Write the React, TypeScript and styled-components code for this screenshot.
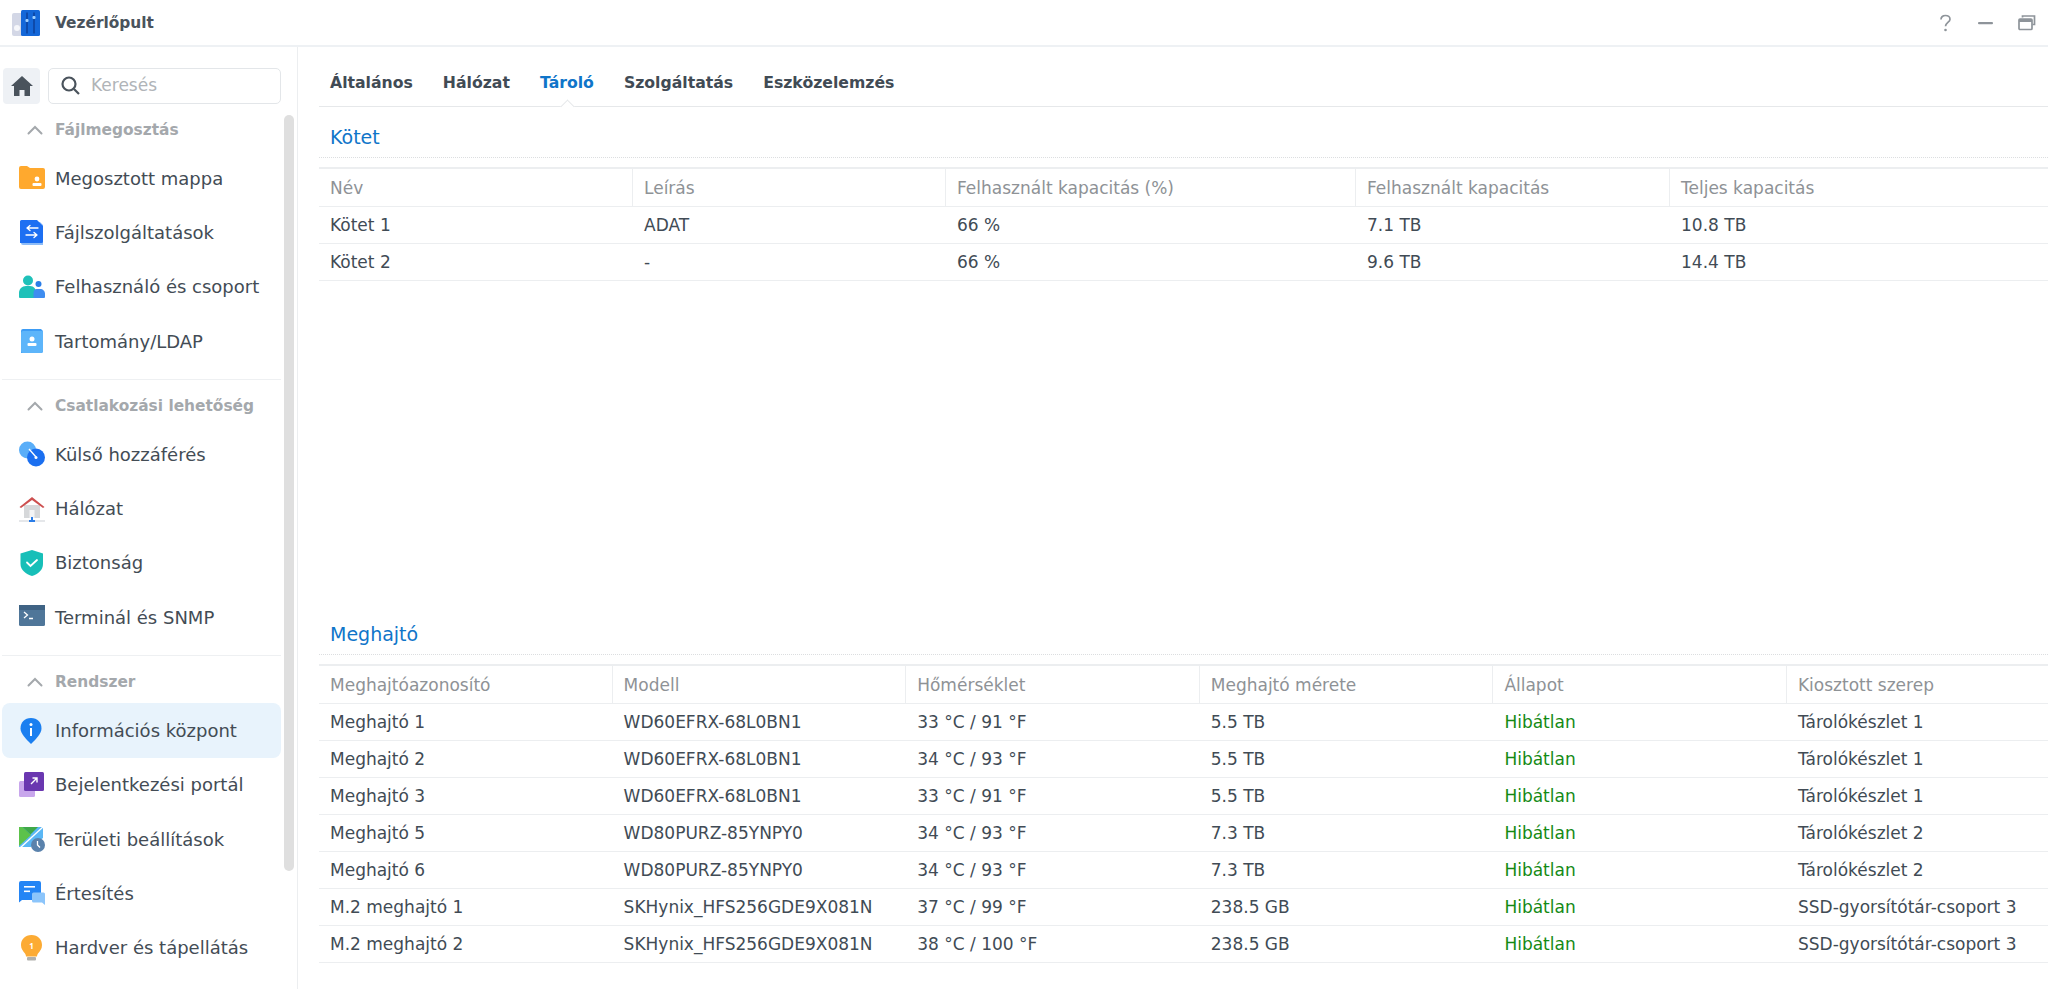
import React from "react";
import styled, { createGlobalStyle } from "styled-components";

const Global = createGlobalStyle`
  html, body { margin: 0; padding: 0; height: 100%; background: #fff; overflow: hidden; }
  body { font-family: "DejaVu Sans", "Noto Sans", sans-serif; color: #414b55; }
`;

const Page = styled.div`
  width: 2048px; height: 989px; display: flex; flex-direction: column; overflow: hidden; background: #fff;
`;
const TitleBar = styled.header`
  height: 45px; flex: none; display: flex; align-items: center; padding: 0 12px 0 12px;
  border-bottom: 2px solid #eef1f4; box-sizing: content-box;
`;
const AppLogo = styled.svg`width: 28px; height: 28px; flex: none;`;
const AppTitle = styled.span`margin-left: 15px; font-size: 15.400px; font-weight: 700; color: #4a535c; flex: 1;`;
const WinButtons = styled.div`display: flex; align-items: center; gap: 23px; color: #8e949a;`;
const WinIcon = styled.svg`width: 18px; height: 18px; display: block;`;

const Body = styled.div`flex: 1; display: flex; min-height: 0;`;
const Sidebar = styled.aside`
  width: 298px; flex: none; border-right: 1px solid #eceef0; position: relative; overflow: hidden; padding: 21px 16px 0 2px; box-sizing: border-box;
`;
const SearchRow = styled.div`display: flex; gap: 8px; height: 36px; margin-bottom: 5px;`;
const HomeBtn = styled.div`
  width: 37px; height: 36px; border-radius: 4px; background: #eef1f5; display: flex; align-items: center; justify-content: center; flex: none; margin-left: 1px;
`;
const SearchBox = styled.div`
  flex: 1; border: 1px solid #e3e6e9; border-radius: 5px; display: flex; align-items: center; padding: 0 0 2px 12px; gap: 11px; font-size: 17px; color: #b0b4b8;
`;
const Group = styled.div<{ $divider?: boolean }>`
  border-bottom: ${p => (p.$divider ? "1px solid #eef0f2" : "none")};
  padding-bottom: ${p => (p.$divider ? "11px" : "0")};
  margin-bottom: 5px;
`;
const GroupHead = styled.div`
  height: 42px; display: flex; align-items: center; font-size: 15.400px; font-weight: 700; color: #a4a8ac; padding-left: 25px; gap: 12px;
`;
const NavItem = styled.div<{ $active?: boolean }>`
  height: 54.300px; border-radius: 8px; display: flex; align-items: center; padding-left: 17px; gap: 10px; font-size: 18px; color: #434c55;
  background: ${p => (p.$active ? "#e8f3fc" : "transparent")};
`;
const NavIcon = styled.svg`width: 26px; height: 26px; flex: none;`;
const ScrollThumb = styled.div`
  position: absolute; right: 3px; top: 68px; width: 10px; height: 756px; background: #dfdfdf; border-radius: 5px;
`;

const Main = styled.main`flex: 1; min-width: 0; padding-left: 21px; display: flex; flex-direction: column; overflow: hidden;`;
const Tabs = styled.nav`
  height: 60px; flex: none; border-bottom: 1px solid #e6e8ea; display: flex; align-items: center; gap: 30px; padding: 12px 0 0 11px; box-sizing: border-box; position: relative;
`;
const Tab = styled.span<{ $active?: boolean }>`
  font-size: 15.700px; font-weight: 700; color: ${p => (p.$active ? "#0f75c9" : "#414b55")}; position: relative;
  ${p => p.$active ? `
    &::after { content: ""; position: absolute; left: 50%; bottom: -20px; width: 10px; height: 10px; margin-left: -5px; background: #fff;
      border-left: 1px solid #e6e8ea; border-top: 1px solid #e6e8ea; transform: rotate(45deg) scale(.9); }
  ` : ""}
`;
const Section = styled.section<{ $h: number }>`height: ${p => p.$h}px; flex: none;`;
const SectionTitle = styled.div`
  height: 51px; box-sizing: border-box; border-bottom: 1px dotted #dcdee0; color: #0f75c9; font-size: 19px; padding: 17px 0 0 11px; line-height: 26px;
`;
const Table = styled.div`margin-top: 9px; border-top: 2px solid #eceef0;`;
const Row = styled.div<{ $cols: string; $head?: boolean }>`
  display: grid; grid-template-columns: ${p => p.$cols}; height: ${p => (p.$head ? "38px" : "37px")};
  border-bottom: 1px solid #eceef0; box-sizing: border-box;
`;
const Cell = styled.div<{ $head?: boolean; $ok?: boolean }>`
  display: flex; align-items: center; padding: ${p => (p.$head ? "1px" : "0")} 0 0 11px; font-size: 17px; white-space: nowrap; overflow: hidden;
  color: ${p => (p.$ok ? "#148a14" : p.$head ? "#8e9296" : "#414b55")};
  border-right: ${p => (p.$head ? "1px solid #eceef0" : "none")};
  &:last-child { border-right: none; }
`;

const Chevron = () => (
  <svg width="16" height="10" viewBox="0 0 16 10" fill="none"><path d="M1.5 8.5 8 2l6.5 6.5" stroke="#a4a8ac" strokeWidth="2" strokeLinecap="round" /></svg>
);

const icons: Record<string, React.ReactNode> = {
  folder: <>
    <path d="M0 3a2 2 0 0 1 2-2h6l3 2h13a2 2 0 0 1 2 2v17a2 2 0 0 1-2 2H2a2 2 0 0 1-2-2z" fill="#ffa92e" />
    <circle cx="18" cy="14" r="2.4" fill="#fff" /><rect x="13.5" y="18" width="9" height="3" rx="1" fill="#fff" />
  </>,
  file: <>
    <path d="M2 3h19l3 3v20H4a2 2 0 0 1-2-2z" fill="#8dbcf7" />
    <path d="M1 2.500A1.500 1.500 0 0 1 2.500 1H18l6 6v15.500a1.500 1.500 0 0 1-1.500 1.500H1z" fill="#1d6ff2" />
    <path d="M8 9h11M8 9l3-2.500M8 9l3 2.500M18 16H7M18 16l-3-2.500M18 16l-3 2.500" stroke="#fff" strokeWidth="1.300" fill="none" strokeLinecap="round" />
  </>,
  users: <>
    <circle cx="9" cy="6.500" r="5" fill="#1fc1b9" /><circle cx="19.500" cy="10" r="3" fill="#2a7de8" />
    <path d="M0 23v-4c0-4 3-7 7-7h4c4 0 6 3 6 7v5H1a1 1 0 0 1-1-1z" fill="#1fc1b9" />
    <path d="M14.500 24v-5c0-2 1-4 3-4h3.500c3 0 5 2 5 5v3a1 1 0 0 1-1 1z" fill="#3f8df0" />
  </>,
  ldap: <>
    <path d="M2 3a2 2 0 0 1 2-2h18l2 2v20a2 2 0 0 1-2 2H2z" fill="#3d9cf5" />
    <path d="M2 5a2 2 0 0 1 2-2h20v20a2 2 0 0 1-2 2H4a2 2 0 0 1-2-2z" fill="#5db5fa" />
    <circle cx="13" cy="11" r="2.500" fill="#fff" /><rect x="8.500" y="15" width="9" height="3" rx="1" fill="#fff" />
  </>,
  ext: <>
    <circle cx="8.500" cy="9" r="8.500" fill="#5aaef8" /><circle cx="17" cy="16.500" r="9" fill="#1b6ff0" />
    <path d="M10 8l7 8" stroke="#fff" strokeWidth="1.400" /><circle cx="17" cy="16.500" r="1.500" fill="#fff" />
  </>,
  net: <>
    <rect x="5" y="9" width="16" height="13" fill="#d6d8da" /><rect x="10.500" y="14" width="5" height="8" fill="#f3f4f5" />
    <path d="M0.500 11 13 1l12.500 10-1.500 1L13 4 2 12z" fill="#cd4f4f" />
    <path d="M0 25h26" stroke="#d4d8dc" strokeWidth="1.200" /><rect x="12" y="21" width="2" height="3" fill="#2a7de8" /><rect x="10" y="24" width="6" height="2" fill="#2a7de8" />
  </>,
  shield: <>
    <path d="M13 0l11 3.500V14c0 6-5 10-11 12C7 24 1.500 20 1.500 14V3.500z" fill="#17bfb8" />
    <path d="M8 12.500l3.500 3.500L18 10" stroke="#fff" strokeWidth="1.800" fill="none" strokeLinecap="round" />
  </>,
  term: <>
    <rect y="1" width="26" height="21" rx="1.500" fill="#4f7699" /><rect y="1" width="26" height="5" fill="#3f6384" />
    <path d="M5 8l3.500 3L5 14M10 14.500h4" stroke="#fff" strokeWidth="1.300" fill="none" />
  </>,
  info: <>
    <path d="M12 0C5.500 0 1.500 4.500 1.500 10.500c0 5 6 11 10.500 15.500 4.500-4.500 10.500-10.500 10.500-15.500C22.500 4.500 18.500 0 12 0z" fill="#1b7ff0" />
    <circle cx="12" cy="6.500" r="1.500" fill="#fff" /><rect x="11" y="10" width="2" height="8" fill="#fff" />
  </>,
  portal: <>
    <rect x="0" y="9" width="16" height="16" rx="1.500" fill="#c8a6ec" />
    <rect x="5" y="0" width="20" height="19" rx="1.500" fill="#6a37b0" />
    <path d="M12 12l6-6M13.500 6H18v4.500" stroke="#fff" strokeWidth="1.400" fill="none" />
  </>,
  region: <>
    <path d="M0 1h24v11L12 21H0z" fill="#5ab7f5" />
    <path d="M0 1h3.500L12 9 0 20z" fill="#5cc24a" />
    <path d="M3.500 1H19l-7.500 7.500z" fill="#3fa848" />
    <path d="M25 0 0 23" stroke="#fff" strokeWidth="1.300" />
    <circle cx="19" cy="19" r="7" fill="#5a82ac" /><path d="M18.500 15v4l2.500 2.500" stroke="#fff" strokeWidth="1.300" fill="none" />
  </>,
  notify: <>
    <path d="M0 3a2 2 0 0 1 2-2h18a2 2 0 0 1 2 2v15a2 2 0 0 1-2 2H3l-3 2.500z" fill="#2485f5" />
    <rect x="5" y="6" width="11" height="1.600" fill="#fff" /><rect x="5" y="10.500" width="6" height="1.600" fill="#fff" />
    <path d="M13 14a1.500 1.500 0 0 1 1.500-1.500h10A1.500 1.500 0 0 1 26 14v11l-3-2.500h-8.500A1.500 1.500 0 0 1 13 21z" fill="#8cc5fb" />
  </>,
  bulb: <>
    <path d="M12.500 0C6 0 2 4.500 2 10c0 4 2 6 4 8.500.7 1 1 2 1 3h11c0-1 .3-2 1-3 2-2.500 4-4.500 4-8.500C23 4.500 19 0 12.500 0z" fill="#fcab34" />
    <rect x="8" y="22" width="9" height="3.500" rx="1" fill="#b0b0ac" />
    <text x="12.500" y="14" fontSize="8" fontWeight="700" fill="#fff" textAnchor="middle" fontFamily="Noto Sans">1</text>
  </>,
};

const Icon = ({ name }: { name: string }) => <NavIcon viewBox="0 0 26 26">{icons[name]}</NavIcon>;

const groups = [
  { title: "Fájlmegosztás", divider: true, items: [["folder", "Megosztott mappa"], ["file", "Fájlszolgáltatások"], ["users", "Felhasználó és csoport"], ["ldap", "Tartomány/LDAP"]] },
  { title: "Csatlakozási lehetőség", divider: true, items: [["ext", "Külső hozzáférés"], ["net", "Hálózat"], ["shield", "Biztonság"], ["term", "Terminál és SNMP"]] },
  { title: "Rendszer", divider: false, items: [["info", "Információs központ"], ["portal", "Bejelentkezési portál"], ["region", "Területi beállítások"], ["notify", "Értesítés"], ["bulb", "Hardver és tápellátás"]] },
];

const volCols = "314px 313px 410px 314px 1fr";
const volHead = ["Név", "Leírás", "Felhasznált kapacitás (%)", "Felhasznált kapacitás", "Teljes kapacitás"];
const volRows = [
  ["Kötet 1", "ADAT", "66 %", "7.1 TB", "10.8 TB"],
  ["Kötet 2", "-", "66 %", "9.6 TB", "14.4 TB"],
];
const driveCols = "293.600px 293.600px 293.600px 293.600px 293.600px 1fr";
const driveHead = ["Meghajtóazonosító", "Modell", "Hőmérséklet", "Meghajtó mérete", "Állapot", "Kiosztott szerep"];
const wd6 = "WD60EFRX-68L0BN1", wd8 = "WD80PURZ-85YNPY0", sk = "SKHynix_HFS256GDE9X081N";
const driveRows = [
  ["Meghajtó 1", wd6, "33 °C / 91 °F", "5.5 TB", "Hibátlan", "Tárolókészlet 1"],
  ["Meghajtó 2", wd6, "34 °C / 93 °F", "5.5 TB", "Hibátlan", "Tárolókészlet 1"],
  ["Meghajtó 3", wd6, "33 °C / 91 °F", "5.5 TB", "Hibátlan", "Tárolókészlet 1"],
  ["Meghajtó 5", wd8, "34 °C / 93 °F", "7.3 TB", "Hibátlan", "Tárolókészlet 2"],
  ["Meghajtó 6", wd8, "34 °C / 93 °F", "7.3 TB", "Hibátlan", "Tárolókészlet 2"],
  ["M.2 meghajtó 1", sk, "37 °C / 99 °F", "238.5 GB", "Hibátlan", "SSD-gyorsítótár-csoport 3"],
  ["M.2 meghajtó 2", sk, "38 °C / 100 °F", "238.5 GB", "Hibátlan", "SSD-gyorsítótár-csoport 3"],
];

const DataTable = ({ cols, head, rows }: { cols: string; head: string[]; rows: string[][] }) => (
  <Table>
    <Row $cols={cols} $head>{head.map(h => <Cell key={h} $head>{h}</Cell>)}</Row>
    {rows.map(r => (
      <Row key={r[0]} $cols={cols}>
        {r.map((c, i) => <Cell key={i} $ok={c === "Hibátlan"}>{c}</Cell>)}
      </Row>
    ))}
  </Table>
);

export default function App() {
  return (
    <Page>
      <Global />
      <TitleBar>
        <AppLogo viewBox="0 0 28 28">
          <rect x="0" y="4" width="12" height="23" rx="2" fill="#d3d7e6" />
          <circle cx="5" cy="19" r="3" fill="#f6f7fb" />
          <rect x="9" y="1" width="19" height="26" rx="1.500" fill="#1467d8" />
          <path d="M15 3.500v21M22 3.500v21" stroke="#0c3f98" strokeWidth="1.400" />
          <rect x="13.500" y="10" width="3" height="3" rx="1" fill="#9fd0ff" /><rect x="20.500" y="7" width="3" height="3" rx="1" fill="#9fd0ff" />
        </AppLogo>
        <AppTitle>Vezérlőpult</AppTitle>
        <WinButtons>
          <WinIcon viewBox="0 0 18 18"><path d="M5 5.500C5 3 7 1.500 9.500 1.500S14 3 14 5.200c0 3-4.500 3.500-4.500 7" stroke="currentColor" strokeWidth="1.700" fill="none" /><circle cx="9.500" cy="16" r="1.300" fill="currentColor" /></WinIcon>
          <WinIcon viewBox="0 0 18 18"><rect x="1" y="8" width="15" height="2.200" rx="1" fill="currentColor" /></WinIcon>
          <WinIcon viewBox="0 0 18 18"><path d="M4.500 3.500V2h12v8.500h-2" stroke="currentColor" strokeWidth="1.700" fill="none" /><rect x="1" y="5" width="13" height="10.500" rx="1" stroke="currentColor" strokeWidth="1.700" fill="none" /><rect x="1" y="5" width="13" height="3" fill="currentColor" /></WinIcon>
        </WinButtons>
      </TitleBar>
      <Body>
        <Sidebar>
          <SearchRow>
            <HomeBtn>
              <svg width="22" height="20" viewBox="0 0 22 20"><path d="M11 0 0 10h3v10h5.500v-6h5v6H19V10h3z" fill="#4a535c" /></svg>
            </HomeBtn>
            <SearchBox>
              <svg width="19" height="19" viewBox="0 0 19 19" fill="none" stroke="#4a535c" strokeWidth="2.200"><circle cx="8" cy="8" r="6.500" /><path d="m13 13 5 5" /></svg>
              Keresés
            </SearchBox>
          </SearchRow>
          {groups.map(g => (
            <Group key={g.title} $divider={g.divider}>
              <GroupHead><Chevron />{g.title}</GroupHead>
              {g.items.map(([ic, label]) => (
                <NavItem key={label} $active={label === "Információs központ"}>
                  <Icon name={ic} />{label}
                </NavItem>
              ))}
            </Group>
          ))}
          <ScrollThumb />
        </Sidebar>
        <Main>
          <Tabs>
            <Tab>Általános</Tab><Tab>Hálózat</Tab><Tab $active>Tároló</Tab><Tab>Szolgáltatás</Tab><Tab>Eszközelemzés</Tab>
          </Tabs>
          <Section $h={497}>
            <SectionTitle>Kötet</SectionTitle>
            <DataTable cols={volCols} head={volHead} rows={volRows} />
          </Section>
          <Section $h={380}>
            <SectionTitle>Meghajtó</SectionTitle>
            <DataTable cols={driveCols} head={driveHead} rows={driveRows} />
          </Section>
        </Main>
      </Body>
    </Page>
  );
}
